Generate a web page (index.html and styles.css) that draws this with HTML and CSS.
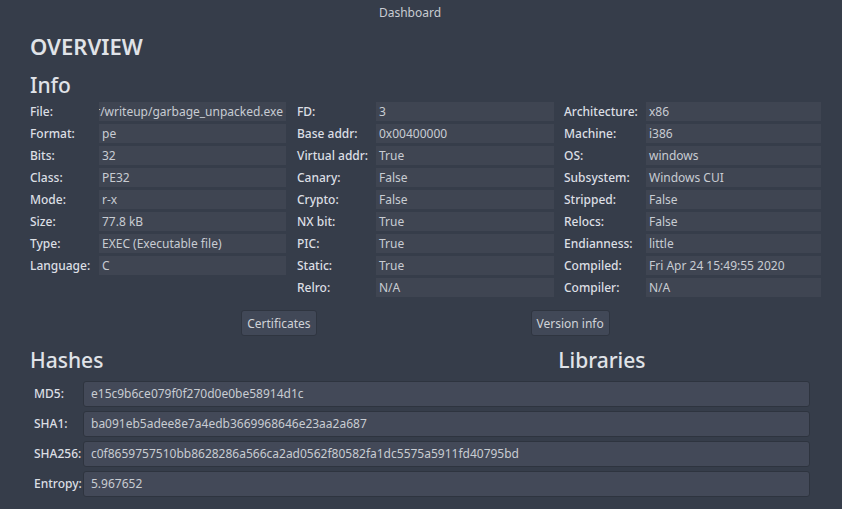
FILE: index.html
```html
<!DOCTYPE html>
<html>
<head>
<meta charset="utf-8">
<link rel="stylesheet" href="styles.css">
</head>
<body>
<div class="topbar">Dashboard</div>
<div class="content">
  <h1 class="title">OVERVIEW</h1>
  <h2 class="section info-head">Info</h2>
  <div class="info">
    <div class="group g1">
      <span class="lbl">File:</span><span class="val path"><span>r/writeup/garbage_unpacked.exe</span></span>
      <span class="lbl">Format:</span><span class="val">pe</span>
      <span class="lbl">Bits:</span><span class="val">32</span>
      <span class="lbl">Class:</span><span class="val">PE32</span>
      <span class="lbl">Mode:</span><span class="val">r-x</span>
      <span class="lbl">Size:</span><span class="val">77.8 kB</span>
      <span class="lbl">Type:</span><span class="val">EXEC (Executable file)</span>
      <span class="lbl">Language:</span><span class="val">C</span>
    </div>
    <div class="group g2">
      <span class="lbl">FD:</span><span class="val">3</span>
      <span class="lbl">Base addr:</span><span class="val">0x00400000</span>
      <span class="lbl">Virtual addr:</span><span class="val">True</span>
      <span class="lbl">Canary:</span><span class="val">False</span>
      <span class="lbl">Crypto:</span><span class="val">False</span>
      <span class="lbl">NX bit:</span><span class="val">True</span>
      <span class="lbl">PIC:</span><span class="val">True</span>
      <span class="lbl">Static:</span><span class="val">True</span>
      <span class="lbl">Relro:</span><span class="val">N/A</span>
    </div>
    <div class="group g3">
      <span class="lbl">Architecture:</span><span class="val">x86</span>
      <span class="lbl">Machine:</span><span class="val">i386</span>
      <span class="lbl">OS:</span><span class="val">windows</span>
      <span class="lbl">Subsystem:</span><span class="val">Windows CUI</span>
      <span class="lbl">Stripped:</span><span class="val">False</span>
      <span class="lbl">Relocs:</span><span class="val">False</span>
      <span class="lbl">Endianness:</span><span class="val">little</span>
      <span class="lbl">Compiled:</span><span class="val">Fri Apr 24 15:49:55 2020</span>
      <span class="lbl">Compiler:</span><span class="val">N/A</span>
    </div>
  </div>
  <div class="buttons">
    <button class="btn">Certificates</button>
    <button class="btn">Version info</button>
  </div>
  <div class="subheads">
    <h2 class="section">Hashes</h2>
    <h2 class="section libs">Libraries</h2>
  </div>
  <div class="hashes">
    <span class="hlbl">MD5:</span><span class="hval">e15c9b6ce079f0f270d0e0be58914d1c</span>
    <span class="hlbl">SHA1:</span><span class="hval">ba091eb5adee8e7a4edb3669968646e23aa2a687</span>
    <span class="hlbl">SHA256:</span><span class="hval">c0f8659757510bb8628286a566ca2ad0562f80582fa1dc5575a5911fd40795bd</span>
    <span class="hlbl">Entropy:</span><span class="hval">5.967652</span>
  </div>
</div>
</body>
</html>
```
FILE: styles.css
```css
html, body {
  margin: 0;
  padding: 0;
  background: #363d4a;
  height: 100%;
  overflow: hidden;
}
body {
  font-family: "Noto Sans", "Open Sans", sans-serif;
  color: #dfe2e7;
  font-size: 12px;
}
.topbar {
  height: 26px;
  line-height: 26px;
  text-align: center;
  font-size: 12px;
  color: #c9ccd2;
  padding-right: 22px;
}
.content {
  padding: 0 21px 0 30px;
}
.title {
  margin: 5px 0 0 0;
  font-size: 22px;
  font-weight: 600;
  line-height: 30px;
  color: #e0e3e8;
}
.section {
  margin: 0;
  font-size: 21px;
  font-weight: 500;
  line-height: 28px;
  color: #e0e3e8;
}
.info-head {
  margin-top: 10px;
}
.info {
  display: flex;
  margin-top: 3px;
}
.group {
  display: grid;
  row-gap: 3px;
  grid-auto-rows: 19px;
  align-content: start;
}
.g1 { grid-template-columns: 69px 187px; }
.g2 { grid-template-columns: 79px 178px; margin-left: 11px; }
.g3 { grid-template-columns: 82px 175px; margin-left: 10px; }
.lbl {
  line-height: 19px;
  color: #dcdfe4;
  font-weight: 500;
  white-space: nowrap;
}
.val {
  background: #3f4552;
  color: #c8ccd2;
  line-height: 19px;
  padding: 0 3px;
  white-space: nowrap;
  overflow: hidden;
}
.path {
  display: flex;
  justify-content: flex-end;
}
.buttons {
  display: flex;
  justify-content: center;
  gap: 214px;
  margin-top: 13px;
}
.btn {
  font-family: inherit;
  font-size: 12px;
  color: #d0d3d8;
  background: #414857;
  border: 1px solid #2f3540;
  border-radius: 3px;
  height: 26px;
  padding: 0 5px;
}
.subheads {
  display: flex;
  margin-top: 10px;
}
.libs {
  margin-left: 455px;
}
.hashes {
  display: grid;
  grid-template-columns: 49px 727px;
  grid-auto-rows: 26px;
  row-gap: 4px;
  margin: 7px 0 0 4px;
}
.hlbl {
  line-height: 26px;
  color: #dcdfe4;
  font-weight: 500;
  white-space: nowrap;
}
.hval {
  background: #434958;
  border: 1px solid #2e343f;
  border-radius: 3px;
  line-height: 24px;
  padding: 0 7px;
  color: #c8ccd2;
  white-space: nowrap;
  overflow: hidden;
}
```
